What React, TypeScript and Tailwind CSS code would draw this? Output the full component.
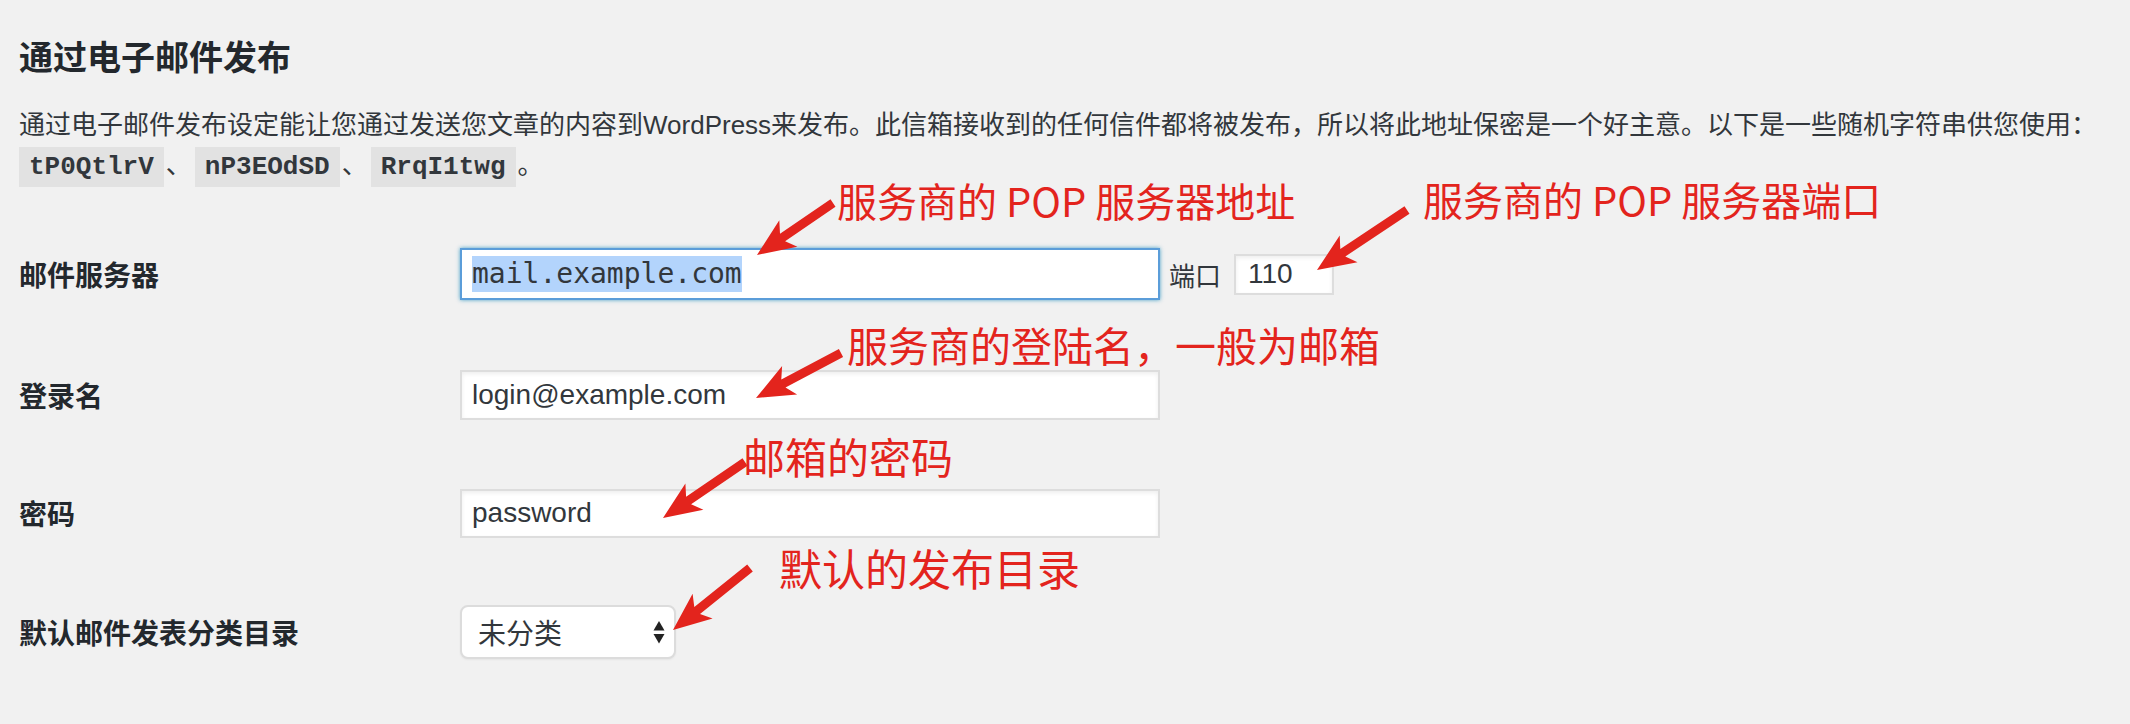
type Pt = [number, number];

// red annotation arrows: tail -> tip, full page coordinates
const arrows: { tail: Pt; tip: Pt }[] = [
  { tail: [833, 203], tip: [757, 255] },
  { tail: [1407, 210], tip: [1317, 270] },
  { tail: [841, 353], tip: [756, 398] },
  { tail: [745, 462], tip: [663, 518] },
  { tail: [750, 568], tip: [673, 630] },
];

function arrowPoints(tail: Pt, tip: Pt) {
  const dx = tip[0] - tail[0];
  const dy = tip[1] - tail[1];
  const len = Math.hypot(dx, dy);
  const ux = dx / len;
  const uy = dy / len;
  const px = -uy;
  const py = ux;
  const shaft = 4.5;
  const headLen = 38;
  const notch = 31;
  const headW = 16;
  const at = (d: number, w: number): Pt => [tip[0] - ux * d + px * w, tip[1] - uy * d + py * w];
  const pts: Pt[] = [
    [tail[0] + px * shaft, tail[1] + py * shaft],
    at(notch, shaft),
    at(headLen, headW),
    tip,
    at(headLen, -headW),
    at(notch, -shaft),
    [tail[0] - px * shaft, tail[1] - py * shaft],
  ];
  return pts.map((p) => `${p[0].toFixed(1)},${p[1].toFixed(1)}`).join(" ");
}

const cjk = "font-['Noto_Sans_CJK_SC',sans-serif]";
const mixed = "font-['Liberation_Sans','Noto_Sans_CJK_SC',sans-serif]";

function Code({ children }: { children: string }) {
  return (
    <code className="bg-[#e2e2e2] px-[10px] py-[5px] font-['Liberation_Mono',monospace] font-bold text-[26px] text-[#32373c]">
      {children}
    </code>
  );
}

function Label({ children }: { children: string }) {
  return (
    <div className={`w-[441px] shrink-0 ${cjk} text-[28px] font-bold text-[#23282d]`}>{children}</div>
  );
}

export default function App() {
  return (
    <div className="relative min-h-screen w-full overflow-hidden bg-[#f1f1f1] pl-[19px] text-[#23282d]">
      <h2 className={`mt-[33px] ${cjk} text-[34px] font-bold leading-[46px] text-[#23282d]`}>
        通过电子邮件发布
      </h2>

      <p className={`mt-[26px] ${mixed} text-[26px] leading-[40px] text-[#32373c]`}>
        <span className="whitespace-nowrap">
          通过电子邮件发布设定能让您通过发送您文章的内容到WordPress来发布。此信箱接收到的任何信件都将被发布，所以将此地址保密是一个好主意。以下是一些随机字符串供您使用：
        </span>
        <br />
        <Code>tP0QtlrV</Code>
        <span className="ml-[2px] mr-[3px]">、</span>
        <Code>nP3EOdSD</Code>
        <span className="ml-[2px] mr-[3px]">、</span>
        <Code>RrqI1twg</Code>
        <span className="ml-[2px]">。</span>
      </p>

      <div className="mt-[27px] flex flex-col">
        {/* mail server */}
        <div className="flex h-[120px] items-center">
          <Label>邮件服务器</Label>
          <div className="flex h-[52px] w-[700px] items-center border-2 border-[#5b9dd9] bg-white pl-[10px] shadow-[0_0_4px_rgba(30,140,190,0.8)]">
            <span className="inline-block h-[36px] bg-[#b3d4fc] font-['DejaVu_Sans_Mono',monospace] text-[28px] leading-[36px] text-[#32373c]">
              mail.example.com
            </span>
          </div>
          <span className={`ml-[9px] ${cjk} text-[26px] text-[#32373c]`}>端口</span>
          <input
            readOnly
            value="110"
            className="ml-[13px] h-[41px] w-[100px] border-2 border-[#dddddd] bg-white pl-[12px] font-['Liberation_Sans',sans-serif] text-[28px] text-[#32373c] shadow-[inset_0_2px_4px_rgba(0,0,0,0.07)] outline-none"
          />
        </div>

        {/* login */}
        <div className="flex h-[121px] items-center">
          <Label>登录名</Label>
          <input
            readOnly
            value="login@example.com"
            className="h-[50px] w-[700px] border-2 border-[#dddddd] bg-white pl-[10px] font-['Liberation_Sans',sans-serif] text-[28px] text-[#32373c] shadow-[inset_0_2px_4px_rgba(0,0,0,0.07)] outline-none"
          />
        </div>

        {/* password */}
        <div className="flex h-[116px] items-center">
          <Label>密码</Label>
          <input
            readOnly
            value="password"
            className="h-[49px] w-[700px] border-2 border-[#dddddd] bg-white pl-[10px] font-['Liberation_Sans',sans-serif] text-[28px] text-[#32373c] shadow-[inset_0_2px_4px_rgba(0,0,0,0.07)] outline-none"
          />
        </div>

        {/* default category */}
        <div className="flex h-[122px] items-center">
          <Label>默认邮件发表分类目录</Label>
          <div className="flex h-[54px] w-[216px] items-center justify-between rounded-[8px] border-2 border-[#dcdcdc] bg-white pl-[16px] pr-[9px] shadow-[0_1px_2px_rgba(0,0,0,0.05)]">
            <span className={`${cjk} text-[28px] text-[#32373c]`}>未分类</span>
            <svg width="12" height="23" viewBox="0 0 12 23" className="text-[#222]">
              <path d="M6 0 L11.5 9.5 L0.5 9.5 Z" fill="currentColor" />
              <path d="M0.5 13 L11.5 13 L6 22.5 Z" fill="currentColor" />
            </svg>
          </div>
        </div>
      </div>

      {/* annotations */}
      <svg
        className="pointer-events-none absolute left-0 top-0"
        width="2130"
        height="724"
        viewBox="0 0 2130 724"
      >
        {arrows.map((a, i) => (
          <polygon key={i} points={arrowPoints(a.tail, a.tip)} fill="#e3241d" />
        ))}
      </svg>
      <span className={`absolute left-[837px] top-[180px] whitespace-nowrap ${cjk} text-[40px] leading-[40px] text-[#e3241d]`}>
        服务商的 POP 服务器地址
      </span>
      <span className={`absolute left-[1423px] top-[179px] whitespace-nowrap ${cjk} text-[40px] leading-[40px] text-[#e3241d]`}>
        服务商的 POP 服务器端口
      </span>
      <span className={`absolute left-[847px] top-[324px] whitespace-nowrap ${cjk} text-[41px] leading-[41px] text-[#e3241d]`}>
        服务商的登陆名，一般为邮箱
      </span>
      <span className={`absolute left-[743px] top-[435px] whitespace-nowrap ${cjk} text-[42px] leading-[42px] text-[#e3241d]`}>
        邮箱的密码
      </span>
      <span className={`absolute left-[779px] top-[546px] whitespace-nowrap ${cjk} text-[43px] leading-[43px] text-[#e3241d]`}>
        默认的发布目录
      </span>
    </div>
  );
}
